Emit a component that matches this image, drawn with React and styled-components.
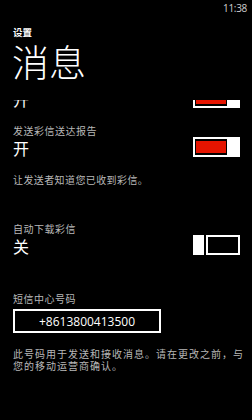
import React from 'react'
import styled, { createGlobalStyle } from 'styled-components'

const GlobalStyle = createGlobalStyle`
  html, body {
    margin: 0;
    padding: 0;
    background: #000;
  }
  body {
    font-family: "Open Sans", "Noto Sans CJK SC", sans-serif;
    color: #fff;
  }
`

const Screen = styled.div`
  width: 252px;
  height: 420px;
  background: #000;
  display: flex;
  flex-direction: column;
  overflow: hidden;
`

const Top = styled.div`
  height: 100px;
  flex: none;
  display: flex;
  flex-direction: column;
`

const StatusBar = styled.div`
  height: 16px;
  display: flex;
  justify-content: flex-end;
  align-items: center;
  padding-right: 5px;
  font-family: "Open Sans", sans-serif;
  font-size: 10px;
  color: #d0d0d0;
  letter-spacing: -0.3px;
`

const AppName = styled.div`
  margin: 9px 0 0 13px;
  font-family: "Noto Sans CJK SC", sans-serif;
  font-size: 9.5px;
  font-weight: 700;
  line-height: 14px;
`

const PageTitle = styled.div`
  margin: 0 0 0 12px;
  font-family: "Noto Sans CJK SC", sans-serif;
  font-size: 37px;
  font-weight: 300;
  line-height: 44px;
`

const Viewport = styled.div`
  flex: 1;
  overflow: hidden;
`

const List = styled.div`
  margin-top: -25px;
  padding: 0 12px 0 13px;
  display: flex;
  flex-direction: column;
`

const Section = styled.div`
  display: flex;
  flex-direction: column;
  margin-bottom: ${p => p.$gap}px;
`

const Label = styled.div`
  font-family: "Noto Sans CJK SC", sans-serif;
  font-size: 10px;
  letter-spacing: 0.5px;
  line-height: 13px;
  color: #b8b8b8;
`

const Row = styled.div`
  height: 20px;
  display: flex;
  align-items: center;
  justify-content: space-between;
`

const Value = styled.div`
  font-family: "Noto Sans CJK SC", sans-serif;
  font-size: 16px;
  line-height: 20px;
  padding-top: 2px;
`

const Description = styled.div`
  margin-top: ${p => p.$top}px;
  margin-right: -6px;
  font-family: "Noto Sans CJK SC", sans-serif;
  font-size: 10px;
  letter-spacing: ${p => p.$ls}px;
  line-height: ${p => p.$lh || 13}px;
  color: #b8b8b8;
`

const Switch = styled.div`
  width: 47px;
  height: 20px;
  display: flex;
  flex-direction: ${p => (p.$on ? 'row' : 'row-reverse')};
  gap: ${p => (p.$on ? 0 : 2)}px;
`

const Track = styled.div`
  flex: 1;
  box-sizing: border-box;
  border: 2px solid #fff;
  padding: 2px 1px 2px 1px;
  display: flex;
`

const Fill = styled.div`
  flex: 1;
  background: #e51400;
`

const Thumb = styled.div`
  width: 11px;
  height: 20px;
  background: #fff;
  flex: none;
`

const NumberBox = styled.div`
  margin-top: 4px;
  width: 148px;
  height: 24px;
  box-sizing: border-box;
  border: 2px solid #fff;
  display: flex;
  align-items: center;
  justify-content: center;
  font-family: "Open Sans", sans-serif;
  font-size: 12px;
  color: #fff;
`

function Toggle({ on }) {
  return (
    <Switch $on={on}>
      <Track>{on && <Fill />}</Track>
      <Thumb />
    </Switch>
  )
}

function Setting({ label, value, on, gap }) {
  return (
    <Section $gap={gap}>
      <Label>{label}</Label>
      <Row>
        <Value>{value}</Value>
        <Toggle on={on} />
      </Row>
    </Section>
  )
}

export default function App() {
  return (
    <>
      <GlobalStyle />
      <Screen>
        <Top>
          <StatusBar>11:38</StatusBar>
          <AppName>设置</AppName>
          <PageTitle>消息</PageTitle>
        </Top>
        <Viewport>
          <List>
            <Setting label="发送短信送达报告" value="开" on gap={16} />
            <Section $gap={36}>
              <Label>发送彩信送达报告</Label>
              <Row>
                <Value>开</Value>
                <Toggle on />
              </Row>
              <Description $top={16} $ls={0.4}>让发送者知道您已收到彩信。</Description>
            </Section>
            <Setting label="自动下载彩信" value="关" on={false} gap={37} />
            <Section $gap={0}>
              <Label>短信中心号码</Label>
              <NumberBox>+8613800413500</NumberBox>
              <Description $top={15} $lh={12} $ls={1}>
                此号码用于发送和接收消息。请在更改之前，与您的移动运营商确认。
              </Description>
            </Section>
          </List>
        </Viewport>
      </Screen>
    </>
  )
}
